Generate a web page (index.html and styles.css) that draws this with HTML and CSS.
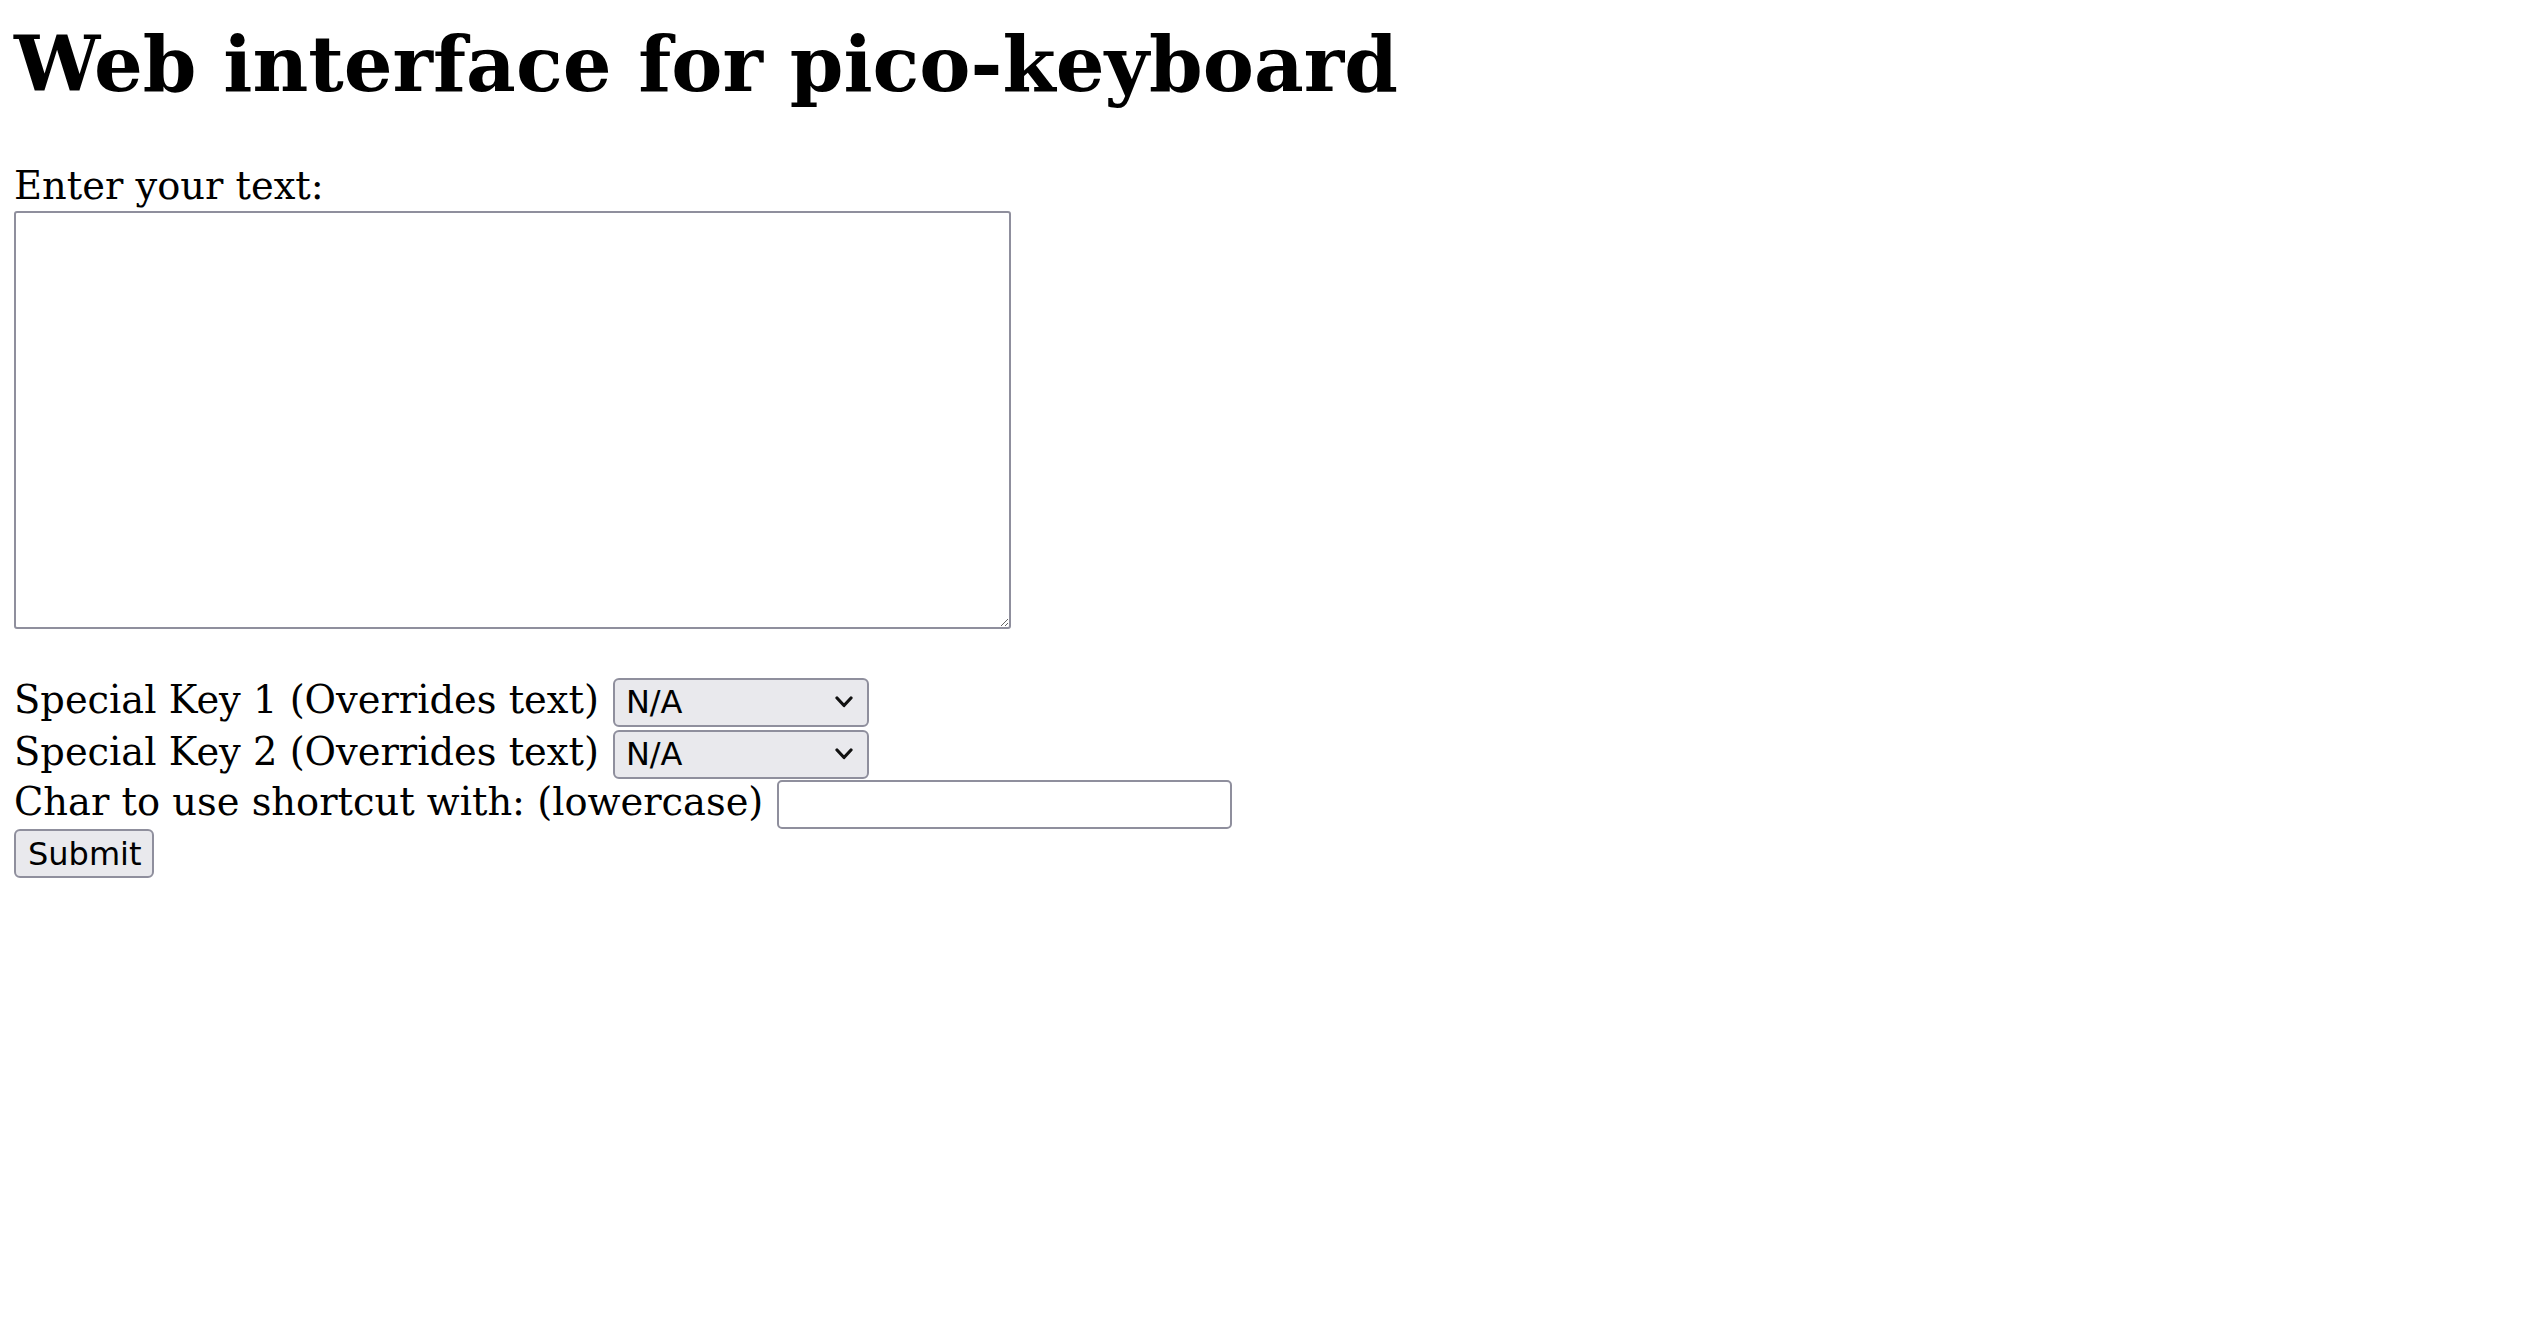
FILE: index.html
```html
<!DOCTYPE html>
<html>
<head>
<meta charset="utf-8">
<title>pico-keyboard</title>
<link rel="stylesheet" href="styles.css">
</head>
<body class="page">
<h1 class="title">Web interface for pico-keyboard</h1>
<form class="form">
<label class="label" for="text">Enter your text:</label>
<textarea id="text" class="textarea"></textarea>
<div class="row row-first">
<label class="label" for="k1">Special Key 1 (Overrides text)</label>
<select id="k1" class="select"><option>N/A</option></select>
</div>
<div class="row">
<label class="label" for="k2">Special Key 2 (Overrides text)</label>
<select id="k2" class="select"><option>N/A</option></select>
</div>
<div class="row">
<label class="label" for="c">Char to use shortcut with: (lowercase)</label>
<input id="c" class="input" type="text">
</div>
<div class="row">
<input class="button" type="submit" value="Submit">
</div>
</form>
</body>
</html>
```
FILE: styles.css
```css
html { background: #fff; }
.page {
  margin: 0;
  padding: 0 14px;
  font-family: "DejaVu Serif", serif;
  font-size: 38.4px;
  color: #000;
}
.title {
  font-family: "DejaVu Serif", serif;
  font-weight: bold;
  font-size: 76.8px;
  line-height: 89px;
  margin: 20px 0 54px;
}
.form { margin: 0; }
.label {
  display: block;
  line-height: 45px;
  white-space: nowrap;
}
.row .label { display: inline; }
.textarea {
  display: block;
  box-sizing: border-box;
  width: 997px;
  height: 418px;
  margin: 3px 0 48px;
  border: 2px solid #8f8f9d;
  border-radius: 3px;
  background: #fff;
  padding: 4px;
  font-family: monospace;
  font-size: 32px;
}
.row {
  display: flex;
  align-items: baseline;
  gap: 14px;
  height: 50px;
}
.row-first { height: 52px; }
.select, .input, .button {
  box-sizing: border-box;
  height: 49px;
  margin: 0;
  font-family: "DejaVu Sans", sans-serif;
  font-size: 32px;
  color: #000;
  border: 2px solid #8f8f9d;
}
.select {
  -webkit-appearance: none;
  appearance: none;
  width: 256px;
  padding: 0 40px 0 11px;
  border-radius: 6px;
  background-color: #e9e9ed;
  background-image: url("data:image/svg+xml,%3Csvg xmlns='http://www.w3.org/2000/svg' width='18' height='12' viewBox='0 0 18 12'%3E%3Cpath d='M2 2 L9 9.5 L16 2' fill='none' stroke='%23111' stroke-width='3.2' stroke-linecap='round' stroke-linejoin='round'/%3E%3C/svg%3E");
  background-repeat: no-repeat;
  background-position: right 14px center;
  background-size: 18px 12px;
}
.input {
  width: 455px;
  padding: 0 6px;
  border-radius: 5px;
  background: #fff;
}
.button {
  width: 140px;
  padding: 0 12px;
  border-radius: 6px;
  background: #e9e9ed;
}
```
